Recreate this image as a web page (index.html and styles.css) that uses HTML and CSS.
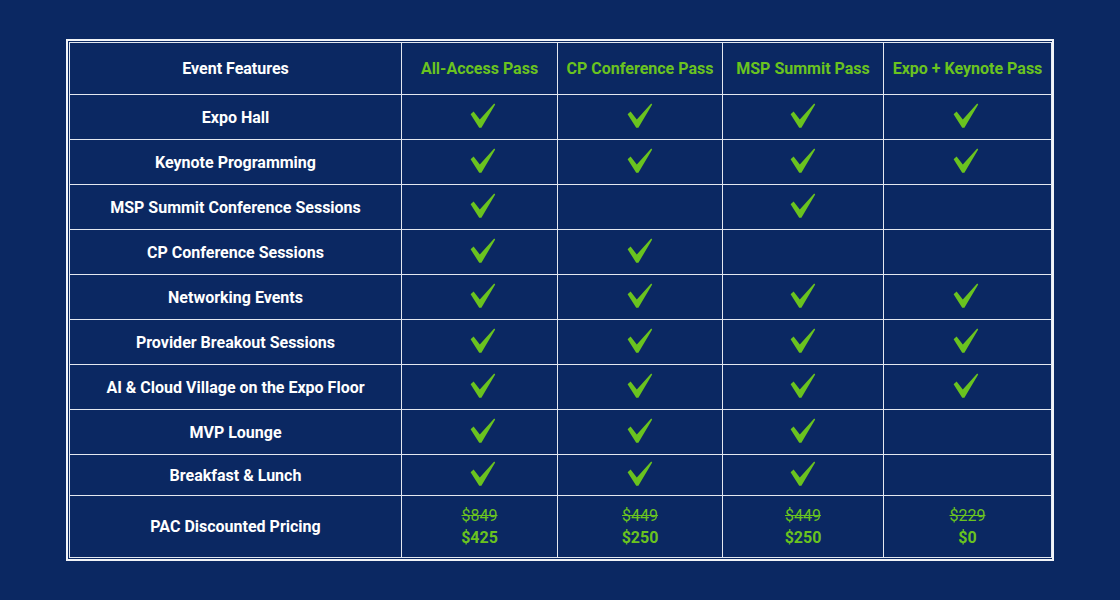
FILE: index.html
```html
<!DOCTYPE html>
<html lang="en">
<head>
<meta charset="utf-8">
<title>Pass Comparison</title>
<link rel="stylesheet" href="styles.css">
</head>
<body>
<svg width="0" height="0" class="defs" aria-hidden="true">
  <defs>
    <symbol id="chk" viewBox="0 0 26 26">
      <path d="M0.6 11.2 L3.6 8.6 L9.8 16.4 L24.2 0.6 L25.2 1.6 L11.4 24.8 L9.2 24.8 Z" fill="#6ac31f"/>
    </symbol>
  </defs>
</svg>
<div class="frame">
  <table class="grid">
    <colgroup>
      <col class="c0"><col class="c1"><col class="c2"><col class="c3"><col class="c4">
    </colgroup>
    <thead>
      <tr class="head">
        <th class="feat">Event Features</th>
        <th>All-Access Pass</th>
        <th>CP Conference Pass</th>
        <th>MSP Summit Pass</th>
        <th>Expo + Keynote Pass</th>
      </tr>
    </thead>
    <tbody>
      <tr><td class="feat">Expo Hall</td><td><svg class="ck"><use href="#chk"/></svg></td><td><svg class="ck"><use href="#chk"/></svg></td><td><svg class="ck"><use href="#chk"/></svg></td><td><svg class="ck"><use href="#chk"/></svg></td></tr>
      <tr><td class="feat">Keynote Programming</td><td><svg class="ck"><use href="#chk"/></svg></td><td><svg class="ck"><use href="#chk"/></svg></td><td><svg class="ck"><use href="#chk"/></svg></td><td><svg class="ck"><use href="#chk"/></svg></td></tr>
      <tr><td class="feat">MSP Summit Conference Sessions</td><td><svg class="ck"><use href="#chk"/></svg></td><td></td><td><svg class="ck"><use href="#chk"/></svg></td><td></td></tr>
      <tr><td class="feat">CP Conference Sessions</td><td><svg class="ck"><use href="#chk"/></svg></td><td><svg class="ck"><use href="#chk"/></svg></td><td></td><td></td></tr>
      <tr><td class="feat">Networking Events</td><td><svg class="ck"><use href="#chk"/></svg></td><td><svg class="ck"><use href="#chk"/></svg></td><td><svg class="ck"><use href="#chk"/></svg></td><td><svg class="ck"><use href="#chk"/></svg></td></tr>
      <tr><td class="feat">Provider Breakout Sessions</td><td><svg class="ck"><use href="#chk"/></svg></td><td><svg class="ck"><use href="#chk"/></svg></td><td><svg class="ck"><use href="#chk"/></svg></td><td><svg class="ck"><use href="#chk"/></svg></td></tr>
      <tr><td class="feat">AI &amp; Cloud Village on the Expo Floor</td><td><svg class="ck"><use href="#chk"/></svg></td><td><svg class="ck"><use href="#chk"/></svg></td><td><svg class="ck"><use href="#chk"/></svg></td><td><svg class="ck"><use href="#chk"/></svg></td></tr>
      <tr><td class="feat">MVP Lounge</td><td><svg class="ck"><use href="#chk"/></svg></td><td><svg class="ck"><use href="#chk"/></svg></td><td><svg class="ck"><use href="#chk"/></svg></td><td></td></tr>
      <tr class="short"><td class="feat">Breakfast &amp; Lunch</td><td><svg class="ck"><use href="#chk"/></svg></td><td><svg class="ck"><use href="#chk"/></svg></td><td><svg class="ck"><use href="#chk"/></svg></td><td></td></tr>
      <tr class="price">
        <td class="feat">PAC Discounted Pricing</td>
        <td><s class="old">$849</s><b class="new">$425</b></td>
        <td><s class="old">$449</s><b class="new">$250</b></td>
        <td><s class="old">$449</s><b class="new">$250</b></td>
        <td><s class="old">$229</s><b class="new">$0</b></td>
      </tr>
    </tbody>
  </table>
</div>
</body>
</html>
```

FILE: styles.css
```css
html, body {
  margin: 0;
  padding: 0;
}
body {
  background: #0b2862;
  width: 1120px;
  height: 600px;
  overflow: hidden;
  font-family: Roboto, "Liberation Sans", sans-serif;
  padding-top: 39px;
  box-sizing: border-box;
}
.defs {
  position: absolute;
}
.frame {
  margin-left: 66px;
  width: 988px;
  height: 522px;
  box-sizing: border-box;
  border: 2px solid #f2f4f8;
  padding: 1px;
}
.grid {
  width: 982px;
  border-collapse: collapse;
  table-layout: fixed;
}
.c0 { width: 332px; }
.c1 { width: 156px; }
.c2 { width: 165px; }
.c3 { width: 161px; }
.c4 { width: 168px; }
.grid th, .grid td {
  border: 1px solid #e4e8f0;
  text-align: center;
  vertical-align: middle;
  padding: 0;
  font-size: 16px;
  font-weight: 700;
}
.grid th {
  color: #6ac31f;
}
.grid th.feat, .grid td.feat {
  color: #ffffff;
}
.head { height: 52px; }
tbody tr { height: 45px; }
tbody tr.short { height: 41px; }
tbody tr.price { height: 62px; }
.ck {
  width: 26px;
  height: 26px;
  display: block;
  margin: -2px auto 0;
  position: relative;
}
td:nth-child(2) .ck { left: 3px; }
td:nth-child(5) .ck { left: -2px; }
.old, .new {
  display: block;
  color: #6ac31f;
  font-size: 16px;
  line-height: 22px;
}
.old {
  font-weight: 400;
  text-decoration: line-through;
}
.new {
  font-weight: 700;
}
```
